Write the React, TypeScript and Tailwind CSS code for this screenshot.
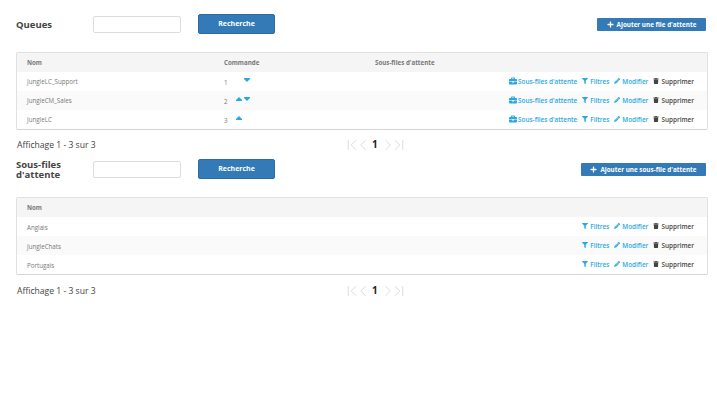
import React from 'react';
import { ChevronFirst, ChevronLast, ChevronLeft, ChevronRight } from 'lucide-react';
import { FaBriefcase, FaFilter, FaPencilAlt, FaPlus, FaTrash } from 'react-icons/fa';

const Up = () => (
  <svg width="6" height="4" viewBox="0 0 6 4" className="text-[#29a9e0]">
    <path d="M3 0 L6 3 V4 H0 V3 Z" fill="currentColor" />
  </svg>
);

const Down = () => (
  <svg width="6" height="4" viewBox="0 0 6 4" className="text-[#29a9e0]">
    <path d="M0 0 H6 V1 L3 4 L0 1 Z" fill="currentColor" />
  </svg>
);

const Actions = ({ sub }: { sub?: boolean }) => (
  <div className="ml-auto flex items-center gap-[5px] text-[6.4px] font-semibold text-[#29a9e0]">
    {sub && (
      <span className="flex items-center gap-px">
        <FaBriefcase size={8} />
        Sous-files d'attente
      </span>
    )}
    <span className="flex items-center gap-[2px]">
      <FaFilter size={6} />
      Filtres
    </span>
    <span className="flex items-center gap-[2px]">
      <FaPencilAlt size={6} />
      Modifier
    </span>
    <span className="flex items-center gap-[2px] text-[#444]">
      <FaTrash size={6} />
      Supprimer
    </span>
  </div>
);

const Pager = () => (
  <div className="ml-[244px] flex items-center text-[#c4c4c4]">
    <ChevronFirst size={18} strokeWidth={0.8} />
    <ChevronLeft size={18} strokeWidth={0.8} className="-ml-[7.5px]" />
    <span className="mb-[2px] ml-[0.5px] mr-[1px] text-[10px] font-bold text-[#222]">1</span>
    <ChevronRight size={18} strokeWidth={0.8} />
    <ChevronLast size={18} strokeWidth={0.8} className="-ml-[7px]" />
  </div>
);

const Footer = () => (
  <div className="flex h-[20px] items-center pl-[17px] text-[8.6px] text-[#444]">
    <span className="w-[82px] whitespace-nowrap">Affichage 1 - 3 sur 3</span>
    <Pager />
  </div>
);

const Toolbar = ({ title, add, addWidth }: { title: React.ReactNode; add: string; addWidth: string }) => (
  <div className="flex h-[20px] items-center pl-[16px] pr-[11px]">
    <h2 className="mt-[2px] w-[77px] text-[9.5px] leading-[10px] font-bold text-[#444]">{title}</h2>
    <input className="mt-px h-[17px] w-[88px] rounded-[2px] border border-[#ddd] bg-white" />
    <button className="ml-[17px] h-[20px] w-[77px] rounded-[2px] border border-[#2e6da4] bg-[#337ab7] text-[7px] font-bold text-white">
      Recherche
    </button>
    <button className={`ml-auto mt-px flex h-[13px] items-center justify-center gap-[3px] rounded-[1px] bg-[#337ab7] text-[6.3px] font-bold text-white ${addWidth}`}>
      <FaPlus size={7} />
      {add}
    </button>
  </div>
);

const App = () => {
  const queues = [
    { name: 'JungleLC_Support', order: 1, up: false, down: true },
    { name: 'JungleCM_Sales', order: 2, up: true, down: true },
    { name: 'JungleLC', order: 3, up: true, down: false },
  ];
  const subs = ['Anglais', 'JungleChats', 'Portugais'];

  return (
    <div className="h-[407px] w-[717px] overflow-hidden bg-white pt-[14px] font-['Open_Sans',sans-serif]">
      <Toolbar title="Queues" add="Ajouter une file d'attente" addWidth="w-[109px]" />

      <div className="mx-[16px] mt-[18px] w-[692px] rounded-[2px] border border-[#e0e0e0] border-b-[#d4d4d4] text-[6.2px] text-[#777]">
        <div className="flex h-[19px] items-center bg-[#f5f5f5] pl-[10px] pr-[12px] font-bold">
          <span className="w-[197px]">Nom</span>
          <span className="w-[151px]">Commande</span>
          <span>Sous-files d'attente</span>
        </div>
        {queues.map((q, i) => (
          <div key={q.name} className={`flex h-[19px] items-center pl-[10px] pr-[13px] ${i === 1 ? 'bg-[#fafafa]' : 'bg-white'}`}>
            <span className="mt-px w-[197px]">{q.name}</span>
            <span className="mt-[3px] w-[12px]">{q.order}</span>
            <span className="mb-[3px] flex w-[139px] items-center gap-[2px]">
              <span className="w-[6px]">{q.up && <Up />}</span>
              <span className="w-[6px]">{q.down && <Down />}</span>
            </span>
            <Actions sub />
          </div>
        ))}
      </div>

      <div className="mt-[5px]">
        <Footer />
      </div>

      <div className="mt-[4px]">
        <Toolbar title={<>Sous-files<br />d'attente</>} add="Ajouter une sous-file d'attente" addWidth="w-[125px]" />
      </div>

      <div className="mx-[16px] mt-[18px] w-[692px] rounded-[2px] border border-[#e0e0e0] border-b-[#d4d4d4] text-[6.2px] text-[#777]">
        <div className="flex h-[19px] items-center bg-[#f5f5f5] pl-[10px] font-bold">
          <span className="mt-px">Nom</span>
        </div>
        {subs.map((s, i) => (
          <div key={s} className={`flex h-[19px] items-center pl-[10px] pr-[13px] ${i === 1 ? 'bg-[#fafafa]' : 'bg-white'}`}>
            <span className="mt-[2px]">{s}</span>
            <Actions />
          </div>
        ))}
      </div>

      <div className="mt-[6px]">
        <Footer />
      </div>
    </div>
  );
};

export default App;
